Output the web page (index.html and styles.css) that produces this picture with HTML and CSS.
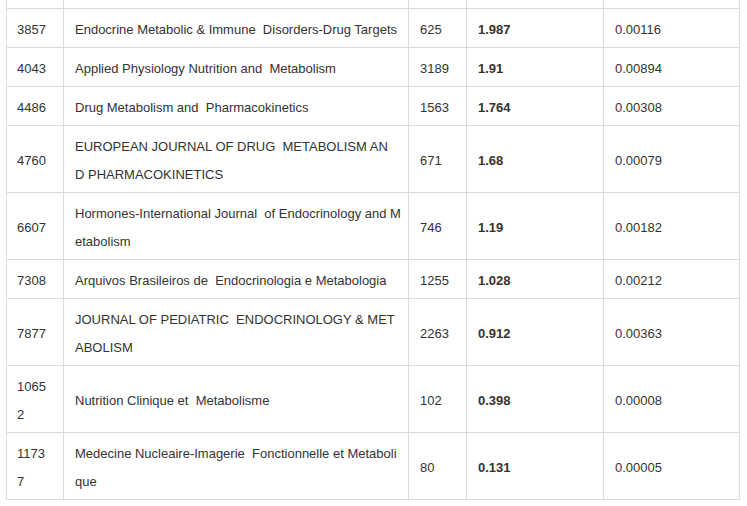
FILE: index.html
```html
<!DOCTYPE html>
<html>
<head>
<meta charset="utf-8">
<link rel="stylesheet" href="styles.css">
</head>
<body>
<table class="jt">
  <tr class="cut">
    <td class="c-rank"></td><td class="c-name"></td><td class="c-cites"></td><td class="c-if"></td><td class="c-ef"></td>
  </tr>
  <tr>
    <td class="c-rank">3857</td><td class="c-name">Endocrine Metabolic &amp; Immune &nbsp;Disorders-Drug Targets</td><td class="c-cites">625</td><td class="c-if">1.987</td><td class="c-ef">0.00116</td>
  </tr>
  <tr>
    <td class="c-rank">4043</td><td class="c-name">Applied Physiology Nutrition and &nbsp;Metabolism</td><td class="c-cites">3189</td><td class="c-if">1.91</td><td class="c-ef">0.00894</td>
  </tr>
  <tr>
    <td class="c-rank">4486</td><td class="c-name">Drug Metabolism and &nbsp;Pharmacokinetics</td><td class="c-cites">1563</td><td class="c-if">1.764</td><td class="c-ef">0.00308</td>
  </tr>
  <tr>
    <td class="c-rank">4760</td><td class="c-name">EUROPEAN JOURNAL OF DRUG &nbsp;METABOLISM AN<br>D PHARMACOKINETICS</td><td class="c-cites">671</td><td class="c-if">1.68</td><td class="c-ef">0.00079</td>
  </tr>
  <tr>
    <td class="c-rank">6607</td><td class="c-name">Hormones-International Journal &nbsp;of Endocrinology and M<br>etabolism</td><td class="c-cites">746</td><td class="c-if">1.19</td><td class="c-ef">0.00182</td>
  </tr>
  <tr>
    <td class="c-rank">7308</td><td class="c-name">Arquivos Brasileiros de &nbsp;Endocrinologia e Metabologia</td><td class="c-cites">1255</td><td class="c-if">1.028</td><td class="c-ef">0.00212</td>
  </tr>
  <tr>
    <td class="c-rank">7877</td><td class="c-name">JOURNAL OF PEDIATRIC &nbsp;ENDOCRINOLOGY &amp; MET<br>ABOLISM</td><td class="c-cites">2263</td><td class="c-if">0.912</td><td class="c-ef">0.00363</td>
  </tr>
  <tr>
    <td class="c-rank">1065<br>2</td><td class="c-name">Nutrition Clinique et &nbsp;Metabolisme</td><td class="c-cites">102</td><td class="c-if">0.398</td><td class="c-ef">0.00008</td>
  </tr>
  <tr>
    <td class="c-rank">1173<br>7</td><td class="c-name">Medecine Nucleaire-Imagerie &nbsp;Fonctionnelle et Metaboli<br>que</td><td class="c-cites">80</td><td class="c-if">0.131</td><td class="c-ef">0.00005</td>
  </tr>
</table>
</body>
</html>
```
FILE: styles.css
```css
html, body {
  margin: 0;
  padding: 0;
  background: #fff;
}

.jt {
  margin-left: 6px;
  border-collapse: separate;
  border-spacing: 0;
  table-layout: fixed;
  width: 734px;
  font-family: "Liberation Sans", Arial, sans-serif;
  font-size: 13px;
  line-height: 28px;
  color: #333;
}

.jt td {
  box-sizing: border-box;
  border-left: 1px solid #dcdcdc;
  border-bottom: 1px solid #dcdcdc;
  padding: 7px 10px 3px 11px;
  vertical-align: middle;
  white-space: nowrap;
  text-align: left;
}

.jt td.c-ef {
  border-right: 1px solid #dcdcdc;
}

.jt .cut td {
  height: 9px;
  padding: 0;
}

.c-rank { width: 57px; }
.jt td.c-rank { padding-left: 10px; }
.c-name { width: 345px; }
.c-cites { width: 58px; }
.c-if { width: 137px; font-weight: bold; }
.c-ef { width: 137px; }
```
